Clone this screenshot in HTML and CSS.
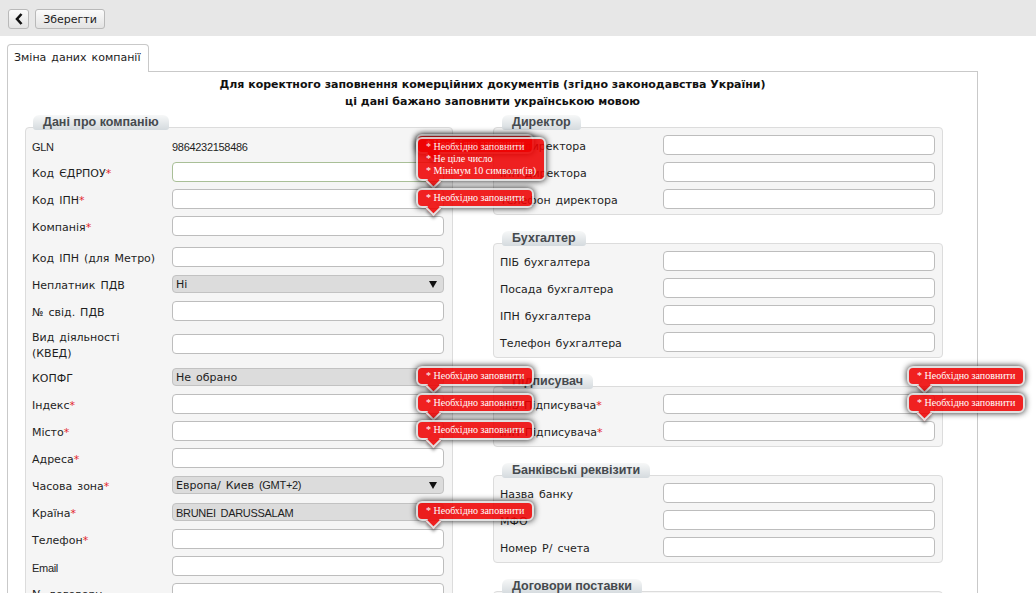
FILE: index.html
```html
<!DOCTYPE html>
<html lang="uk">
<head>
<meta charset="utf-8">
<title>Зміна даних компанії</title>
<link rel="stylesheet" href="styles.css">
</head>
<body>
<div class="topbar">
  <button class="btn btn-back" type="button" aria-label="Назад">
    <svg width="8" height="12" viewBox="0 0 8 12"><path d="M6.5 1 L2 6 L6.5 11" fill="none" stroke="#111" stroke-width="2.6" stroke-linejoin="miter"/></svg>
  </button>
  <button class="btn btn-save" type="button">Зберегти</button>
</div>

<div class="tabs"><div class="tab">Зміна даних компанії</div></div>

<div class="panel">
  <div class="notice">Для коректного заповнення комерційних документів (згідно законодавства України)<br>ці дані бажано заповнити українською мовою</div>

  <div class="cols">
    <div class="col col-left">
      <section class="group">
        <div class="legend">Дані про компанію</div>
        <div class="box">
          <div class="row"><span class="label lat">GLN</span><span class="value lat">9864232158486</span></div>
          <div class="row"><label class="label">Код ЄДРПОУ<em class="req">*</em></label>
            <div class="field"><input class="input input-focus" type="text">
              <div class="tip"><div class="tip-body">* Необхідно заповнити</div><div class="tip-arrow"></div></div>
            </div>
          </div>
          <div class="row"><label class="label">Код ІПН<em class="req">*</em></label>
            <div class="field"><input class="input" type="text">
              <div class="tip"><div class="tip-body">* Необхідно заповнити<br>* Не ціле число<br>* Мінімум 10 символи(ів)</div><div class="tip-arrow"></div></div>
            </div>
          </div>
          <div class="row row-extra"><label class="label">Компанія<em class="req">*</em></label>
            <div class="field"><input class="input" type="text">
              <div class="tip"><div class="tip-body">* Необхідно заповнити</div><div class="tip-arrow"></div></div>
            </div>
          </div>
          <div class="row"><label class="label">Код ІПН (для Метро)</label><div class="field"><input class="input" type="text"></div></div>
          <div class="row"><label class="label">Неплатник ПДВ</label>
            <div class="field"><div class="select"><span>Ні</span><svg class="caret" width="8" height="7" viewBox="0 0 8 7"><path d="M0 0 H8 L4 7 Z" fill="#111"/></svg></div></div>
          </div>
          <div class="row"><label class="label">№ свід. ПДВ</label><div class="field"><input class="input" type="text"></div></div>
          <div class="row"><label class="label">Вид діяльності<br>(КВЕД)</label><div class="field"><input class="input" type="text"></div></div>
          <div class="row"><label class="label">КОПФГ</label>
            <div class="field"><div class="select"><span>Не обрано</span></div></div>
          </div>
          <div class="row"><label class="label">Індекс<em class="req">*</em></label>
            <div class="field"><input class="input" type="text">
              <div class="tip"><div class="tip-body">* Необхідно заповнити</div><div class="tip-arrow"></div></div>
            </div>
          </div>
          <div class="row"><label class="label">Місто<em class="req">*</em></label>
            <div class="field"><input class="input" type="text">
              <div class="tip"><div class="tip-body">* Необхідно заповнити</div><div class="tip-arrow"></div></div>
            </div>
          </div>
          <div class="row"><label class="label">Адреса<em class="req">*</em></label>
            <div class="field"><input class="input" type="text">
              <div class="tip"><div class="tip-body">* Необхідно заповнити</div><div class="tip-arrow"></div></div>
            </div>
          </div>
          <div class="row"><label class="label">Часова зона<em class="req">*</em></label>
            <div class="field"><div class="select"><span>Европа/ Киев <span class="lat">(GMT+2)</span></span><svg class="caret" width="8" height="7" viewBox="0 0 8 7"><path d="M0 0 H8 L4 7 Z" fill="#111"/></svg></div></div>
          </div>
          <div class="row"><label class="label">Країна<em class="req">*</em></label>
            <div class="field"><div class="select"><span class="lat">BRUNEI DARUSSALAM</span></div></div>
          </div>
          <div class="row"><label class="label">Телефон<em class="req">*</em></label>
            <div class="field"><input class="input" type="text">
              <div class="tip"><div class="tip-body">* Необхідно заповнити</div><div class="tip-arrow"></div></div>
            </div>
          </div>
          <div class="row"><label class="label lat">Email</label><div class="field"><input class="input" type="text"></div></div>
          <div class="row"><label class="label">№ договору</label><div class="field"><input class="input" type="text"></div></div>
          <div class="row"><label class="label">Дата договору</label><div class="field"><input class="input" type="text"></div></div>
        </div>
      </section>
    </div>

    <div class="col col-right">
      <section class="group">
        <div class="legend">Директор</div>
        <div class="box">
          <div class="row"><label class="label">ПІБ директора</label><div class="field"><input class="input" type="text"></div></div>
          <div class="row"><label class="label">ІПН директора</label><div class="field"><input class="input" type="text"></div></div>
          <div class="row"><label class="label">Телефон директора</label><div class="field"><input class="input" type="text"></div></div>
        </div>
      </section>
      <section class="group">
        <div class="legend">Бухгалтер</div>
        <div class="box">
          <div class="row"><label class="label">ПІБ бухгалтера</label><div class="field"><input class="input" type="text"></div></div>
          <div class="row"><label class="label">Посада бухгалтера</label><div class="field"><input class="input" type="text"></div></div>
          <div class="row"><label class="label">ІПН бухгалтера</label><div class="field"><input class="input" type="text"></div></div>
          <div class="row"><label class="label">Телефон бухгалтера</label><div class="field"><input class="input" type="text"></div></div>
        </div>
      </section>
      <section class="group">
        <div class="legend">Підписувач</div>
        <div class="box">
          <div class="row"><label class="label">ПІБ Підписувача<em class="req">*</em></label>
            <div class="field"><input class="input" type="text">
              <div class="tip"><div class="tip-body">* Необхідно заповнити</div><div class="tip-arrow"></div></div>
            </div>
          </div>
          <div class="row"><label class="label">ІПН Підписувача<em class="req">*</em></label>
            <div class="field"><input class="input" type="text">
              <div class="tip"><div class="tip-body">* Необхідно заповнити</div><div class="tip-arrow"></div></div>
            </div>
          </div>
        </div>
      </section>
      <section class="group">
        <div class="legend">Банківські реквізити</div>
        <div class="box">
          <div class="row"><label class="label">Назва банку</label><div class="field"><input class="input" type="text"></div></div>
          <div class="row"><label class="label">МФО</label><div class="field"><input class="input" type="text"></div></div>
          <div class="row"><label class="label">Номер Р/ счета</label><div class="field"><input class="input" type="text"></div></div>
        </div>
      </section>
      <section class="group">
        <div class="legend">Договори поставки</div>
        <div class="box">
          <div class="row"><label class="label">Номер договору</label><div class="field"><input class="input" type="text"></div></div>
          <div class="row"><label class="label">Дата договору</label><div class="field"><input class="input" type="text"></div></div>
        </div>
      </section>
    </div>
  </div>
</div>
</body>
</html>
```

FILE: styles.css
```css
html, body {
  overflow: hidden;
}

body {
  margin: 0;
  background: #fff;
  color: #222;
  font-family: "DejaVu Sans", sans-serif;
  font-size: 11px;
  word-spacing: 1.5px;
}

.topbar {
  height: 36px;
  box-sizing: border-box;
  background: #e7e7e7;
  display: flex;
  align-items: flex-start;
  gap: 6px;
  padding: 9px 0 0 8px;
}

.btn {
  height: 20px;
  box-sizing: border-box;
  margin: 0;
  border: 1px solid #b9b9b9;
  border-radius: 3px;
  background: linear-gradient(#fbfbfb, #e3e3e3);
  color: #222;
  font-family: "DejaVu Sans", sans-serif;
  font-size: 11px;
  padding: 0;
  display: flex;
  align-items: center;
  justify-content: center;
}

.btn-back {
  width: 21px;
}

.btn-save {
  width: 70px;
}

.tabs {
  display: flex;
  padding: 8px 0 0 7px;
}

.tab {
  position: relative;
  z-index: 1;
  height: 28px;
  box-sizing: border-box;
  margin-bottom: -1px;
  border: 1px solid #c9c9c9;
  border-bottom: 0;
  border-radius: 4px 4px 0 0;
  background: #fff;
  padding: 0 8px 0 6px;
  line-height: 26px;
}

.panel {
  margin-left: 7px;
  width: 971px;
  min-height: 560px;
  box-sizing: border-box;
  border: 1px solid #c9c9c9;
  border-bottom: 0;
}

.notice {
  padding-top: 4px;
  text-align: center;
  font-weight: bold;
  line-height: 17px;
  color: #111;
  word-spacing: 0;
}

.cols {
  display: flex;
  align-items: flex-start;
  gap: 40px;
  padding: 5px 0 0 17px;
}

.col-left {
  width: 428px;
}

.col-right {
  width: 450px;
}

.group {
  display: flex;
  flex-direction: column;
  align-items: flex-start;
  margin-bottom: 16px;
}

.legend {
  position: relative;
  z-index: 1;
  height: 15px;
  margin: 0 0 -3px 8px;
  padding: 0 10px;
  border-radius: 6px 6px 3px 3px;
  background: linear-gradient(#f7f8f8, #d4dade);
  color: #454a4e;
  font-family: "Liberation Sans", Arial, sans-serif;
  font-weight: bold;
  font-size: 12.5px;
  line-height: 15px;
  word-spacing: 0;
}

.col-right .legend {
  margin-left: 9px;
}

.box {
  align-self: stretch;
  display: flex;
  flex-direction: column;
  gap: 7px;
  padding: 7px 7px 5px 6px;
  border: 1px solid #dcdcdc;
  border-radius: 4px;
  background: #f5f5f5;
}

.row {
  display: flex;
  align-items: center;
  min-height: 20px;
}

.row-extra {
  margin-bottom: 4px;
}

.label {
  flex: none;
  width: 140px;
  padding-top: 2px;
  margin-bottom: -2px;
  line-height: 16px;
  color: #1e1e1e;
}

.col-right .label {
  width: 163px;
}

.req {
  font-style: normal;
  color: #e3262c;
}

.lat {
  font-family: "Liberation Sans", Arial, sans-serif;
  font-size: 11px;
  letter-spacing: -0.3px;
  word-spacing: 2px;
}

.value {
  padding-top: 2px;
  margin-bottom: -2px;
  color: #1e1e1e;
}

.field {
  position: relative;
  flex: none;
  width: 272px;
  height: 20px;
}

.input {
  display: block;
  width: 100%;
  height: 20px;
  box-sizing: border-box;
  margin: 0;
  padding: 0 4px;
  border: 1px solid #bdbdbd;
  border-radius: 4px;
  background: #fff;
  font-family: "DejaVu Sans", sans-serif;
  font-size: 11px;
}

.input-focus {
  border-color: #a9bf97;
}

.select {
  height: 18px;
  margin-top: 1px;
  box-sizing: border-box;
  display: flex;
  align-items: center;
  justify-content: space-between;
  padding: 1px 6px 0 3px;
  border: 1px solid #c2c2c2;
  border-radius: 4px;
  background: #dcdcdc;
  color: #1e1e1e;
  white-space: nowrap;
}

.caret {
  display: block;
}

.tip {
  position: absolute;
  left: 244px;
  bottom: 28px;
  z-index: 10;
  opacity: 0.87;
}

.tip-body {
  padding: 2px 8px;
  border: 2px solid #ddd;
  border-radius: 6px;
  background: #ee0101;
  box-shadow: 0 0 6px #000;
  color: #fff;
  font-family: "Liberation Serif", "DejaVu Serif", serif;
  font-size: 10px;
  line-height: 12px;
  word-spacing: 0;
  white-space: nowrap;
}

.tip-arrow {
  position: absolute;
  left: 12px;
  bottom: -6px;
  width: 9px;
  height: 9px;
  background: #ee0101;
  border-right: 2px solid #ddd;
  border-bottom: 2px solid #ddd;
  box-shadow: 2px 2px 3px rgba(0, 0, 0, 0.45);
  transform: rotate(45deg);
}
```
